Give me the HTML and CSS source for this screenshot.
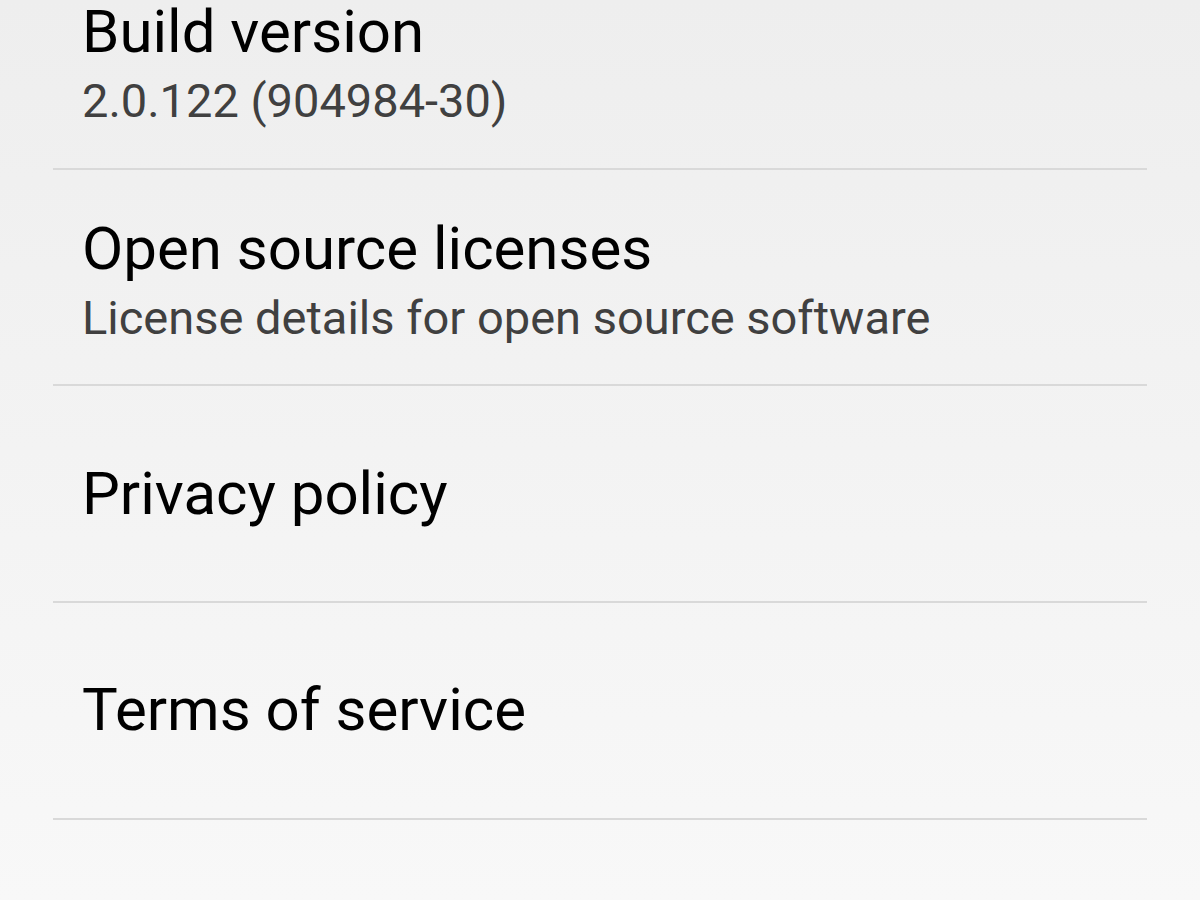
FILE: index.html
```html
<!DOCTYPE html>
<html lang="en">
<head>
<meta charset="utf-8">
<title>About</title>
<link rel="stylesheet" href="styles.css">
</head>
<body>
<main class="list">
  <div class="item item-two">
    <div class="title">Build version</div>
    <div class="summary">2.0.122 (904984-30)</div>
  </div>
  <div class="item item-two">
    <div class="title">Open source licenses</div>
    <div class="summary">License details for open source software</div>
  </div>
  <div class="item">
    <div class="title">Privacy policy</div>
  </div>
  <div class="item">
    <div class="title">Terms of service</div>
  </div>
</main>
</body>
</html>
```
FILE: styles.css
```css
html, body {
  margin: 0;
  height: 100%;
}
body {
  background: linear-gradient(180deg, #eeeeee 0%, #f3f3f3 50%, #f8f8f8 100%);
  font-family: Roboto, "Noto Sans", "Liberation Sans", sans-serif;
  overflow: hidden;
}
.list {
  margin: -47px 0 0 53px;
  width: 1094px;
}
.item {
  box-sizing: border-box;
  height: 216.67px;
  border-bottom: 2px solid #d9d9d9;
  display: flex;
  flex-direction: column;
  justify-content: center;
  padding-left: 29px;
}
.item-two {
  padding-top: 10px;
}
.title {
  font-size: 60px;
  line-height: 70px;
  color: #000;
}
.summary {
  font-size: 47px;
  line-height: 64px;
  color: #404040;
  margin-top: 2px;
}
```
